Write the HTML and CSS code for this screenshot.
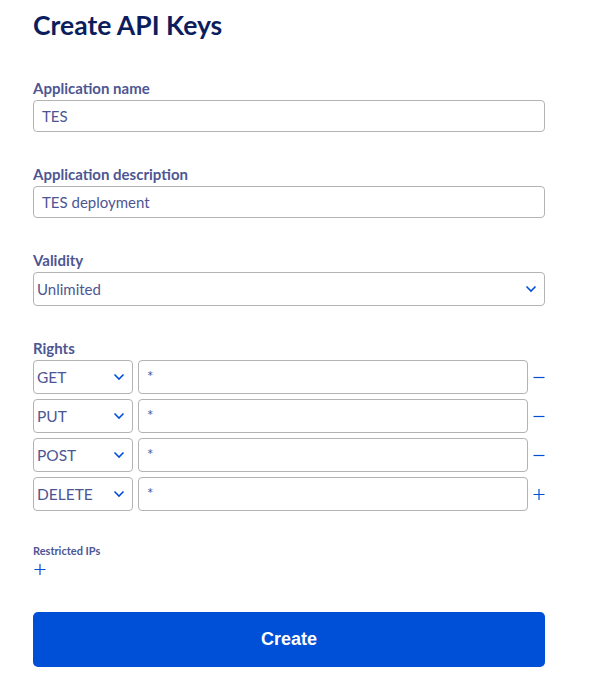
FILE: index.html
```html
<!DOCTYPE html>
<html>
<head>
<meta charset="utf-8">
<link rel="stylesheet" href="styles.css">
</head>
<body>
<main class="page">
  <h1 class="title">Create API Keys</h1>

  <div class="field">
    <label class="label">Application name</label>
    <div class="input">TES</div>
  </div>

  <div class="field">
    <label class="label">Application description</label>
    <div class="input">TES deployment</div>
  </div>

  <div class="field">
    <label class="label">Validity</label>
    <div class="input select">
      <span>Unlimited</span>
      <svg class="chev" width="12" height="8" viewBox="0 0 12 8"><path d="M1.5 1.5 L6 6 L10.5 1.5" fill="none" stroke="#0050d7" stroke-width="1.6"/></svg>
    </div>
  </div>

  <div class="field rights">
    <label class="label">Rights</label>
    <div class="rows">
      <div class="row">
        <div class="input method"><span>GET</span><svg class="chev" width="12" height="8" viewBox="0 0 12 8"><path d="M1.5 1.5 L6 6 L10.5 1.5" fill="none" stroke="#0050d7" stroke-width="1.6"/></svg></div>
        <div class="input path">*</div>
        <span class="act"><svg width="12" height="12" viewBox="0 0 12 12"><path d="M0.5 6.5 H11.5" stroke="#0050d7" stroke-width="1.2"/></svg></span>
      </div>
      <div class="row">
        <div class="input method"><span>PUT</span><svg class="chev" width="12" height="8" viewBox="0 0 12 8"><path d="M1.5 1.5 L6 6 L10.5 1.5" fill="none" stroke="#0050d7" stroke-width="1.6"/></svg></div>
        <div class="input path">*</div>
        <span class="act"><svg width="12" height="12" viewBox="0 0 12 12"><path d="M0.5 6.5 H11.5" stroke="#0050d7" stroke-width="1.2"/></svg></span>
      </div>
      <div class="row">
        <div class="input method"><span>POST</span><svg class="chev" width="12" height="8" viewBox="0 0 12 8"><path d="M1.5 1.5 L6 6 L10.5 1.5" fill="none" stroke="#0050d7" stroke-width="1.6"/></svg></div>
        <div class="input path">*</div>
        <span class="act"><svg width="12" height="12" viewBox="0 0 12 12"><path d="M0.5 6.5 H11.5" stroke="#0050d7" stroke-width="1.2"/></svg></span>
      </div>
      <div class="row">
        <div class="input method"><span>DELETE</span><svg class="chev" width="12" height="8" viewBox="0 0 12 8"><path d="M1.5 1.5 L6 6 L10.5 1.5" fill="none" stroke="#0050d7" stroke-width="1.6"/></svg></div>
        <div class="input path">*</div>
        <span class="act"><svg width="12" height="12" viewBox="0 0 12 12"><path d="M0.5 6.5 H11.5 M6 1 V12" stroke="#0050d7" stroke-width="1.2"/></svg></span>
      </div>
    </div>
  </div>

  <div class="ips">
    <label class="label small">Restricted IPs</label>
    <span class="act plus"><svg width="12" height="12" viewBox="0 0 12 12"><path d="M0.5 6.5 H11.5 M6 1 V12" stroke="#0050d7" stroke-width="1.2"/></svg></span>
  </div>

  <button class="create">Create</button>
</main>
</body>
</html>
```

FILE: styles.css
```css
html, body {
  margin: 0;
  padding: 0;
  background: #ffffff;
}

.page {
  width: 512px;
  padding: 9px 0 0 33px;
  font-family: "Lato", "Open Sans", sans-serif;
  color: #4d5693;
}

.title {
  margin: 0 0 38px 0;
  font-size: 26.5px;
  line-height: 32px;
  font-weight: 700;
  color: #0c1d5e;
}

.field {
  display: flex;
  flex-direction: column;
  margin-bottom: 33px;
}

.label {
  display: block;
  font-size: 15px;
  line-height: 18px;
  font-weight: 700;
  color: #4d5693;
  margin-bottom: 3px;
}

.input {
  box-sizing: border-box;
  height: 32px;
  border: 1px solid #b3b3b3;
  border-radius: 4px;
  padding: 0 8px;
  display: flex;
  align-items: center;
  font-size: 15px;
  color: #4d5693;
  background: #fff;
}

.select {
  height: 34px;
  justify-content: space-between;
  padding: 0 7px 0 3px;
}

.chev {
  display: block;
}

.rows {
  display: flex;
  flex-direction: column;
  gap: 5px;
}

.row {
  display: flex;
  align-items: center;
  gap: 5px;
}

.method {
  width: 100px;
  height: 34px;
  justify-content: space-between;
  padding: 0 7px 0 3px;
  flex: none;
  font-size: 15.5px;
}

.path {
  width: 390px;
  height: 34px;
  flex: none;
  align-items: flex-start;
  padding-top: 6px;
  font-size: 15px;
}

.act {
  display: flex;
  align-items: center;
  justify-content: center;
  width: 12px;
}

.rights {
  margin-bottom: 33px;
}

.ips {
  display: flex;
  flex-direction: column;
  align-items: flex-start;
}

.small {
  font-size: 11px;
  line-height: 14px;
  margin-bottom: 5px;
}

.plus {
  margin-left: 1px;
}

.create {
  display: block;
  box-sizing: border-box;
  width: 512px;
  height: 55px;
  margin-top: 37px;
  border: none;
  border-radius: 5px;
  background: #0050d7;
  color: #ffffff;
  font-family: "Liberation Sans", Arial, sans-serif;
  font-size: 18px;
  font-weight: 700;
}
```
